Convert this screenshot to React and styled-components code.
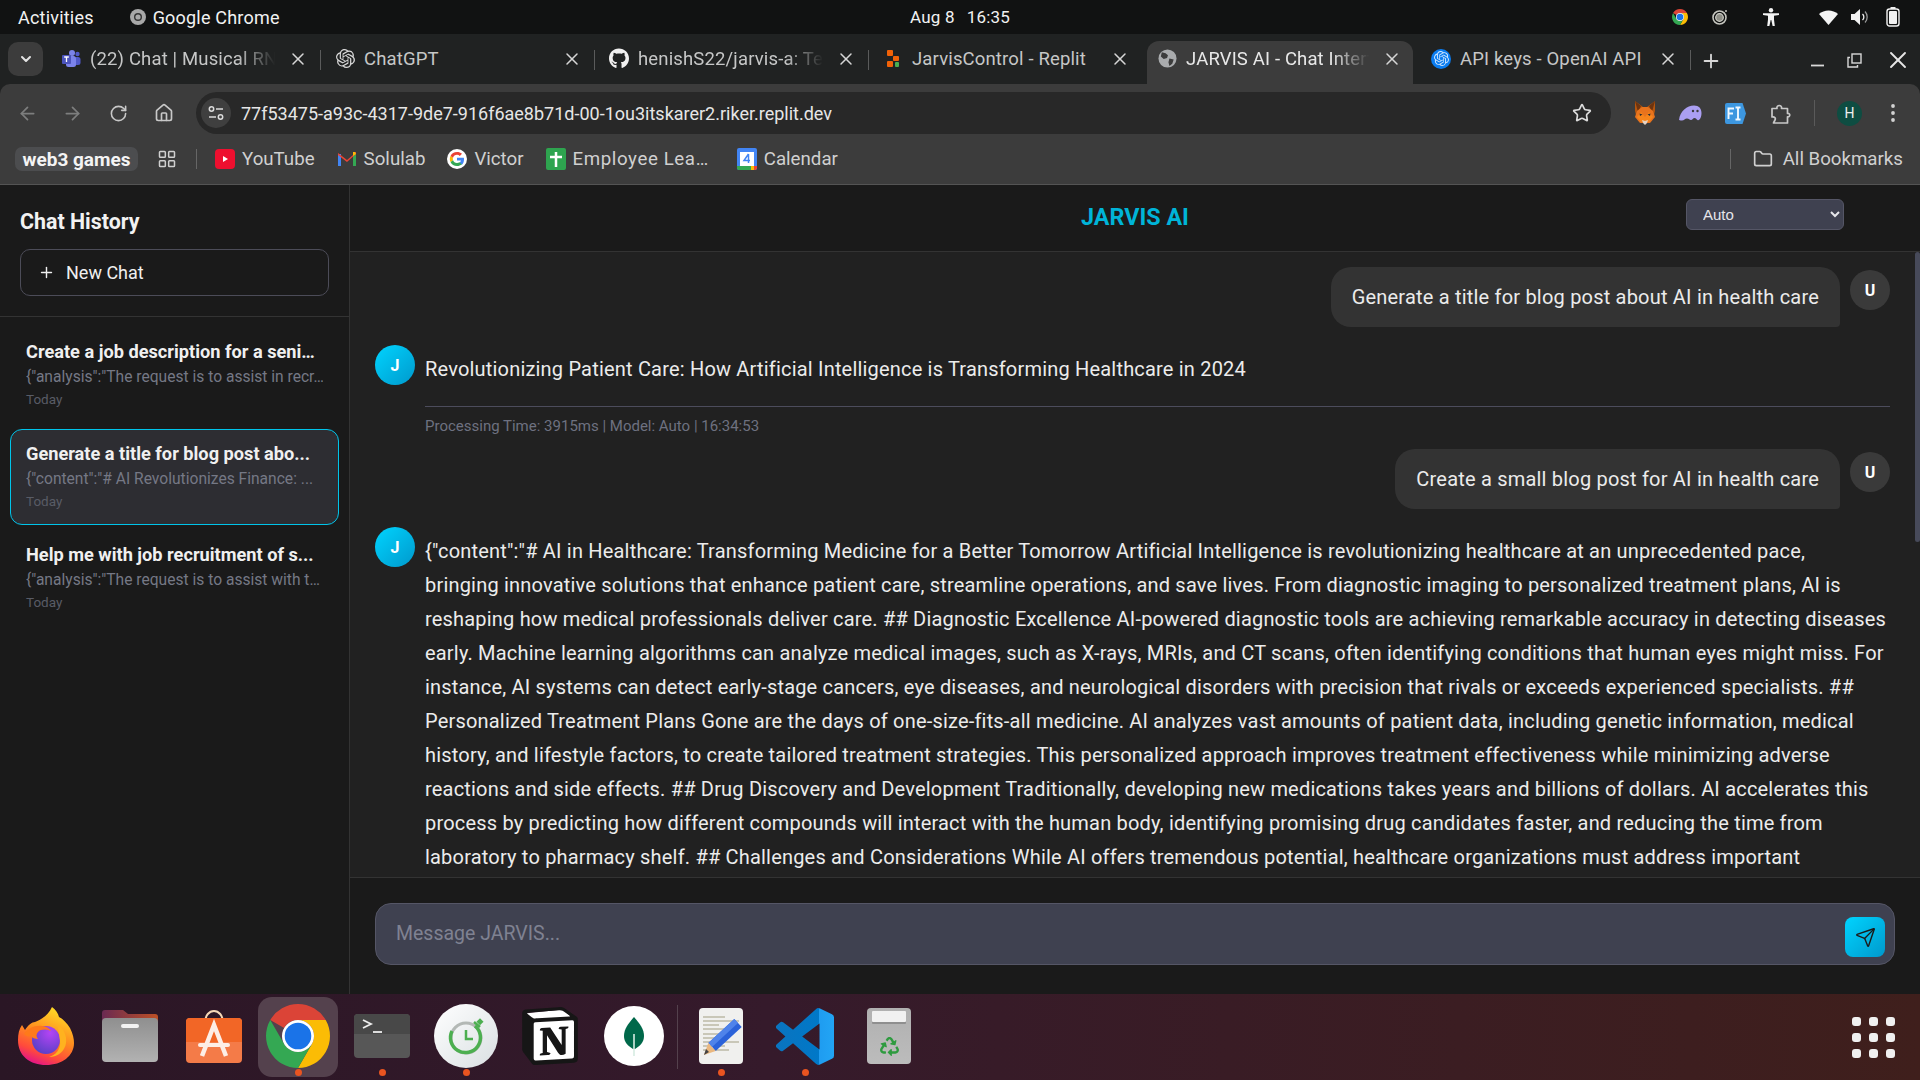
import React from "react";
import styled, { createGlobalStyle } from "styled-components";
import { ArrowLeft, ArrowRight, RotateCw, Home, Star, X, Plus, ChevronDown, Folder, LayoutGrid, Send } from "lucide-react";
import { FaGithub, FaRecycle } from "react-icons/fa";
import { SiOpenai, SiNotion } from "react-icons/si";

const UI = '"Roboto", "Noto Sans", sans-serif';

const Global = createGlobalStyle`
  html, body { margin: 0; padding: 0; background: #111; overflow: hidden; }
  * { box-sizing: border-box; }
  body { font-family: ${UI}; }
`;

const Screen = styled.div`
  width: 1920px; height: 1080px; display: flex; flex-direction: column; overflow: hidden;
`;

/* ---------- GNOME top bar ---------- */
const TopBar = styled.div`
  height: 34px; flex: none; background: #111212; color: #f2f2f2; display: grid;
  grid-template-columns: 1fr auto 1fr; align-items: center; padding: 0 18px; font-size: 18px; letter-spacing: .2px;
`;
const TopLeft = styled.div`display: flex; align-items: center; gap: 36px;`;
const AppName = styled.div`display: flex; align-items: center; gap: 7px;`;
const Clock = styled.div`display: flex; gap: 12px; font-size: 17px;`;
const Tray = styled.div`
  display: flex; align-items: center; justify-content: flex-end; color: #f2f2f2; margin-right: -6px;
`;
const TraySlot = styled.span`
  width: 30px; margin-left: ${p => p.$ml}px; display: flex; justify-content: center; align-items: center;
`;

/* ---------- tabs ---------- */
const TabStrip = styled.div`
  height: 50px; flex: none; background: #202222; display: flex; align-items: flex-end; padding-left: 8px; color: #c6c7c7;
`;
const TabMenu = styled.div`
  width: 35px; height: 34px; border-radius: 10px; background: #3c3c3c; margin: 0 4px 8px 0;
  display: flex; align-items: center; justify-content: center; color: #e4e4e4;
`;
const Tab = styled.div`
  width: ${p => (p.$active ? 266 : 274)}px; height: 43px; display: flex; align-items: center; gap: 9px; position: relative;
  padding: 0 ${p => (p.$active ? 11 : 13)}px 8px ${p => (p.$active ? 10 : 14)}px;
  margin: 0 ${p => (p.$active ? 4 : 0)}px;
  font-size: 18.5px; letter-spacing: .15px;
  color: ${p => (p.$active ? "#e8e8e8" : "#c6c7c7")};
  background: ${p => (p.$active ? "#3c3c3c" : "transparent")};
  border-radius: ${p => (p.$active ? "12px 12px 0 0" : "0")};
  &::after {
    content: ""; position: absolute; right: 0; top: 9px; height: 20px; width: 1px;
    background: ${p => (p.$sep ? "#5a5b5b" : "transparent")};
  }
`;
const TabIcon = styled.span`
  width: 20px; height: 20px; flex: none; display: flex; align-items: center; justify-content: center;
`;
const TabTitle = styled.span`
  flex: 1; min-width: 0; white-space: nowrap; overflow: hidden;
  -webkit-mask-image: ${p => (p.$fade ? "linear-gradient(90deg, #000 78%, transparent 98%)" : "none")};
`;
const TabClose = styled.span`
  width: 20px; flex: none; display: flex; justify-content: center; color: #d6d6d6;
`;
const NewTab = styled.div`
  width: 40px; height: 40px; margin-bottom: 3px; display: flex; align-items: center; justify-content: center; color: #d8d8d8;
`;
const WindowControls = styled.div`
  margin-left: auto; display: flex; align-items: center; gap: 22px; padding-right: 8px; height: 40px; margin-bottom: 4px; color: #e6e6e6;
`;

/* ---------- toolbar ---------- */
const Toolbar = styled.div`
  height: 50px; flex: none; background: #3c3c3c; display: flex; align-items: center; padding: 8px 0 0 16px; border-radius: 10px 10px 0 0;
`;
const ToolbarShade = styled.div`background: #202222; flex: none;`;
const NavButton = styled.span`
  width: 22px; height: 22px; margin-right: 23.5px; flex: none; display: flex; align-items: center; justify-content: center;
  color: ${p => (p.$dim ? "#7d7e7e" : "#c8c8c8")};
`;
const UrlField = styled.div`
  width: 1415px; height: 42px; flex: none; border-radius: 21px; background: #282828; margin-left: -2px;
  display: flex; align-items: center; padding: 0 19px 0 5px; color: #e6e6e6; font-size: 18px;
`;
const SiteChip = styled.span`
  width: 30px; height: 30px; border-radius: 50%; background: #3f3f3f; display: flex; align-items: center; justify-content: center; margin-right: 10px; color: #dcdcdc;
`;
const UrlText = styled.span`flex: 1; white-space: nowrap;`;
const ExtensionRow = styled.div`
  display: flex; align-items: center; flex: 1; padding-left: 11px;
`;
const ExtSlot = styled.span`
  width: 45.5px; display: flex; justify-content: center; align-items: center; flex: none; color: #d2d2d2;
  margin-left: ${p => p.$ml ?? 0}px;
`;
const ToolDivider = styled.span`width: 1px; height: 26px; background: #5a5a5a; margin: 0 12px 0 10px; flex: none;`;
const Avatar = styled.span`
  width: 25px; height: 25px; border-radius: 50%; background: #0e4d42; color: #f0f0f0; font-size: 14px; display: flex; align-items: center; justify-content: center; flex: none; margin-left: 10px;
`;

/* ---------- bookmarks ---------- */
const Bookmarks = styled.div`
  height: 51px; flex: none; background: #3c3c3c; border-bottom: 1px solid #545454; display: flex; align-items: center; padding: 0 17px 0 15px; color: #d0d0d0; font-size: 18.7px;
`;
const BookmarkPill = styled.span`
  height: 24px; width: 123px; border-radius: 7px; background: #4c4d4f; color: #f4f4f4; font-weight: 700; display: flex; align-items: center; justify-content: center; font-size: 19px; margin-right: 19px; white-space: nowrap;
`;
const BarDivider = styled.span`width: 1px; height: 20px; background: #666; margin: 0 ${p => p.$r ?? 18}px 0 ${p => p.$l ?? 19}px; flex: none;`;
const Bookmark = styled.span`
  display: flex; align-items: center; gap: 7px; margin-right: ${p => p.$mr ?? 22}px; white-space: nowrap; letter-spacing: ${p => p.$ls ?? 0}px;
`;
const BookmarkRight = styled.div`margin-left: auto; display: flex; align-items: center; gap: 10px;`;

/* ---------- app ---------- */
const Shell = styled.div`flex: 1; min-height: 0; display: flex; background: #1a1a1a;`;
const Sidebar = styled.aside`
  width: 350px; flex: none; border-right: 1px solid #333; display: flex; flex-direction: column; background: #1a1a1a;
`;
const SideHead = styled.div`
  height: 132px; flex: none; border-bottom: 1px solid #333; padding: 24px 20px 0;
`;
const SideTitle = styled.h2`
  margin: 0 0 14px; font-size: 21.4px; line-height: 26px; font-weight: 700; color: #f2f2f2;
`;
const NewChat = styled.button`
  width: 309px; height: 47px; border: 1px solid #4c4c58; border-radius: 10px; background: transparent; color: #f0f0f0;
  display: flex; align-items: center; gap: 11px; padding: 0 0 0 17px; font: 400 18px ${UI};
`;
const ChatList = styled.div`
  padding: 10px; display: flex; flex-direction: column; gap: 5.5px;
`;
const ChatItem = styled.div`
  height: 96px; padding: 11px 15px 0; border-radius: 12px;
  border: 1px solid ${p => (p.$active ? "#00c4ea" : "transparent")};
  background: ${p => (p.$active ? "#2d2d32" : "transparent")};
`;
const ChatName = styled.div`
  font-size: 18.2px; font-weight: 700; color: #f0f0f0; line-height: 26px; white-space: nowrap; overflow: hidden;
`;
const ChatPreview = styled.div`
  font-size: 15.6px; color: #757885; line-height: 24px; white-space: nowrap; overflow: hidden;
`;
const ChatDate = styled.div`
  font-size: 13.5px; color: #595c66; line-height: 21px;
`;

const Main = styled.main`flex: 1; min-width: 0; display: flex; flex-direction: column;`;
const MainHead = styled.header`
  height: 67px; flex: none; border-bottom: 1px solid #333; display: grid; grid-template-columns: 1fr auto 1fr; align-items: center; background: #1a1a1a;
`;
const Brand = styled.h1`
  grid-column: 2; margin: -2px 0 0; font-size: 23.3px; font-weight: 700; color: #00b4d8;
`;
const ModelSelect = styled.select`
  grid-column: 3; justify-self: end; margin: -7px 76px 0 0; width: 158px; height: 31px; border: 1px solid #555666; border-radius: 6px;
  background: #3f4150; color: #e6e6ea; font: 15px "Liberation Sans", Arial, sans-serif; padding-left: 12px;
`;
const Feed = styled.div`
  flex: 1; min-height: 0; overflow: hidden; background: #212121; padding: 15px 30px 0 25px; position: relative;
`;
const ScrollThumb = styled.div`
  position: absolute; right: 0; top: 0; width: 5px; height: 290px; background: #474a5a; border-radius: 3px;
`;
const UserRow = styled.div`display: flex; justify-content: flex-end; gap: 10px; margin-bottom: ${p => p.$mb}px;`;
const Bubble = styled.div`
  background: #333; color: #ebebeb; border-radius: 20px 20px 4px 20px; padding: 13px 21px; font-size: 20px; letter-spacing: .2px; line-height: 34px; white-space: nowrap;
`;
const Circle = styled.div`
  width: 40px; height: 40px; flex: none; border-radius: 50%; display: flex; align-items: center; justify-content: center; font-weight: 700; font-size: 16px; color: #fff;
  background: ${p => (p.$bot ? "linear-gradient(135deg, #00d4ff, #0099cc)" : "#3a3a3a")};
  margin-top: ${p => (p.$bot ? 0 : 3)}px;
`;
const BotRow = styled.div`display: flex; gap: 10px; margin-bottom: 13px;`;
const BotBody = styled.div`flex: 1; min-width: 0; padding-top: 7px; color: #ececec; font-size: 20px; letter-spacing: .19px; line-height: 34px;`;
const Line = styled.span`display: block; white-space: nowrap;`;
const Meta = styled.div`
  margin-top: 20px; border-top: 1px solid #4c4c5c; padding-top: 9px; font-size: 15px; letter-spacing: 0; line-height: 20px; color: #6e7180;
`;
const Composer = styled.div`
  height: 117px; flex: none; border-top: 1px solid #333; padding: 25px 25px 0; background: #1a1a1a;
`;
const InputBox = styled.div`
  height: 62px; border: 1px solid #555666; border-radius: 16px; background: #3f4150; display: flex; align-items: center; padding: 6px 9px 0 18px;
`;
const MessageInput = styled.input`
  flex: 1; min-width: 0; height: 40px; margin-top: -7px; border: 0; outline: 0; background: transparent; color: #eee; font: 19.5px ${UI};
  &::placeholder { color: #7f8292; opacity: 1; }
`;
const SendButton = styled.button`
  width: 40px; height: 40px; border: 0; border-radius: 8px; padding: 0; background: linear-gradient(135deg, #00d4ff, #0099cc); color: #1a1a1a;
  display: flex; align-items: center; justify-content: center;
`;

/* ---------- dock ---------- */
const Dock = styled.footer`
  height: 86px; flex: none; background: linear-gradient(90deg, #2a1625 0%, #351a2b 40%, #3f1f1c 100%); display: flex; align-items: center; padding: 0 25px 0 4px;
`;
const DockSlot = styled.div`
  width: ${p => (p.$active ? 80 : 84)}px; margin: 0 ${p => (p.$active ? 2 : 0)}px; height: 80px; flex: none; position: relative; display: flex; align-items: center; justify-content: center; border-radius: 14px; padding-bottom: 2px;
  background: ${p => (p.$active ? "#54414d" : "transparent")};
  ${p => p.$running ? `&::after { content: ""; position: absolute; bottom: 1px; left: calc(50% - 3.5px); width: 7px; height: 7px; border-radius: 50%; background: #e95420; }` : ""}
`;
const DockRule = styled.span`width: 1px; height: 64px; background: #54414d; flex: none; margin: 0 1px;`;
const AppGrid = styled.div`
  margin-left: auto; display: grid; grid-template-columns: repeat(3, 9px); gap: 7px 8px;
`;
const AppDot = styled.span`width: 9px; height: 9px; border-radius: 3px; background: #f0f0f0;`;

const ChipBadge = styled.span`
  width: 20px; height: 20px; border-radius: 50%; background: #0a7cf0; display: flex; align-items: center; justify-content: center;
`;
const NotionCube = styled.span`
  width: 58px; height: 60px; position: relative; display: flex; align-items: center; justify-content: center;
  &::before {
    content: ""; position: absolute; inset: 0; background: #fff;
    clip-path: polygon(10% 12%, 72% 6%, 94% 24%, 94% 90%, 26% 96%, 8% 76%);
  }
  svg { position: relative; }
`;
const TrashBin = styled.span`
  width: 44px; height: 56px; border-radius: 4px; background: linear-gradient(#b0b0b0, #bcbcbc); display: flex; align-items: flex-end; justify-content: center; padding-bottom: 8px; position: relative;
  &::before {
    content: ""; position: absolute; left: 5px; right: 5px; top: 3px; height: 11px; background: #f1f1f1; border-radius: 1px; box-shadow: 0 2px 0 #8f8f8f;
  }
`;

/* ---------- drawings ---------- */
const ChromeLogo = ({ size = 20 }) => (
  <svg width={size} height={size} viewBox="4 4 40 40">
    <path fill="#db4437" d="M24 4a20 20 0 0 1 17.32 10H24a10 10 0 0 0-8.66 5L6.68 14A20 20 0 0 1 24 4z" />
    <path fill="#fbbc05" d="M41.32 14A20 20 0 0 1 24 44l8.66-15A10 10 0 0 0 24 14z" />
    <path fill="#34a853" d="M6.68 14l8.66 15A10 10 0 0 0 32.66 29L24 44A20 20 0 0 1 6.68 14z" />
    <circle cx="24" cy="24" r="10" fill="#fff" />
    <circle cx="24" cy="24" r="8.300" fill="#1a73e8" />
  </svg>
);
const GreyChrome = () => (
  <svg width="16" height="16" viewBox="0 0 16 16">
    <circle cx="8" cy="8" r="8" fill="#a8a8a8" /><circle cx="8" cy="8" r="4" fill="#333" /><circle cx="8" cy="8" r="2.6" fill="#a8a8a8" />
  </svg>
);
const TeamsLogo = () => (
  <svg width="20" height="20" viewBox="0 0 20 20">
    <circle cx="11" cy="4" r="3" fill="#7b83eb" /><circle cx="16.5" cy="5" r="2.2" fill="#5059c9" />
    <rect x="13" y="8" width="6.5" height="8" rx="2.5" fill="#5059c9" /><rect x="5" y="7" width="10" height="11" rx="2.5" fill="#7b83eb" />
    <rect x="1" y="6" width="9" height="9" rx="1" fill="#4b53bc" /><path d="M3.2 8h4.6M5.5 8v5" stroke="#fff" strokeWidth="1.3" />
  </svg>
);
const ReplitLogo = () => (
  <svg width="14" height="20" viewBox="0 0 14 20">
    <rect x="1" y="1" width="6" height="6" rx="1" fill="#f26207" /><rect x="7" y="7" width="6" height="5" rx="1" fill="#f26207" /><rect x="1" y="12" width="6" height="6" rx="1" fill="#f26207" />
    <rect x="9" y="13" width="4" height="5" rx="1" fill="#4caf50" />
  </svg>
);
const GlobeLogo = () => (
  <svg width="19" height="19" viewBox="0 0 20 20">
    <circle cx="10" cy="10" r="9.5" fill="#a9abad" />
    <path fill="#3c3c3c" d="M4 3.5l4 1 2.5 2-1 3-3.5 1-3-2.500zM12 10l4.500 1-1.500 4.500-3 2.500-1-4z" />
  </svg>
);
const OpenAiChip = () => <ChipBadge><SiOpenai size={15} color="#cfe6ff" /></ChipBadge>;
const Wifi = () => (
  <svg width="19" height="15" viewBox="0 0 19 15"><path fill="#f4f4f4" d="M0 4C5-.8 14-.8 19 4L9.500 15z" /></svg>
);
const Speaker = () => (
  <svg width="19" height="16" viewBox="0 0 19 16">
    <path fill="#f2f2f2" d="M0 5h3.500L9 0v16l-5.500-5H0z" />
    <path d="M11.500 5a4 4 0 0 1 0 6" fill="none" stroke="#f2f2f2" strokeWidth="1.300" />
    <path d="M14 2.500a8 8 0 0 1 0 11" fill="none" stroke="#999" strokeWidth="1.300" />
  </svg>
);
const Battery = () => (
  <svg width="14" height="20" viewBox="0 0 14 20">
    <rect x="4.500" y="0" width="5" height="2" fill="#eee" /><rect x="1" y="2" width="12" height="17" rx="2.500" fill="none" stroke="#f2f2f2" strokeWidth="1.400" /><rect x="3" y="4" width="8" height="13" rx="1" fill="#f2f2f2" />
  </svg>
);
const TrayRing = () => (
  <svg width="16" height="16" viewBox="0 0 16 16">
    <circle cx="7.500" cy="8.500" r="6.500" fill="none" stroke="#c6c6bf" strokeWidth="1.600" /><circle cx="7.500" cy="8.500" r="3.800" fill="#8e8e86" stroke="#d0d0c8" strokeWidth="1.200" /><circle cx="14" cy="2" r="1" fill="#c6c6bf" />
  </svg>
);
const Person = () => (
  <svg width="16" height="18" viewBox="0 0 16 18" fill="#f4f4f4">
    <circle cx="8" cy="2.200" r="2.200" />
    <path d="M0 5.200h16v1.800l-5 .800v3.700l.8 6.500H9.600L8.300 12H7.700L6.400 18H4.200L5 11.500V7.800L0 7z" />
  </svg>
);
const Minimize = () => <svg width="15" height="14" viewBox="0 0 15 14"><path d="M1 12.500h13" stroke="#d8d8d8" strokeWidth="1.800" /></svg>;
const Restore = () => (
  <svg width="15" height="15" viewBox="0 0 15 15" fill="none" stroke="#d8d8d8" strokeWidth="1.400"><rect x="5" y="1" width="9" height="9" /><path d="M3 4.500H1V14h9.500v-2" /></svg>
);
const Tune = () => (
  <svg width="18" height="18" viewBox="0 0 18 18" fill="none" stroke="#dcdcdc" strokeWidth="1.500">
    <circle cx="4.500" cy="5" r="2.200" /><path d="M9 5h7M2 13h7" /><circle cx="13.500" cy="13" r="2.200" />
  </svg>
);
const Fox = () => (
  <svg width="22" height="24" viewBox="0 0 22 24">
    <path fill="#b5560f" d="M1 0l8 6h4l8-6 0 10-1 4H2L1 10z" />
    <path fill="#6d3410" d="M1 0l6 5-3 6zM21 0l-6 5 3 6z" />
    <path fill="#e8731d" d="M3 10l5-4h6l5 4 2 6-5 6H6l-5-6z" />
    <path fill="#f6851b" d="M7 11l4 5 4-5 4 5-4 5H7l-4-5z" />
    <path fill="#2a2a30" d="M5.500 12.500l3 1-2.500 1.500zM16.500 12.500l-3 1 2.500 1.500z" />
    <path fill="#e6d3c4" d="M8 19l3 1 3-1-1 3 -2 2-2-2z" />
  </svg>
);
const Ghost = () => (
  <svg width="24" height="16" viewBox="0 0 24 16">
    <path fill="#ab9ff2" d="M1 15C2 6 9 .5 16 .5c5 0 7.500 3 7.500 7.500 0 4.500-2 8-4 7-1-.5-1.500-2-3-2s-2 2-3.500 2S11 13.500 9 13.500 6 15.500 4 15.500s-3-.5-3-.5z" />
    <circle cx="15" cy="6" r="1.200" fill="#3c3c3c" /><circle cx="19.500" cy="6" r="1.200" fill="#3c3c3c" />
  </svg>
);
const FiBadge = () => (
  <svg width="21" height="21" viewBox="0 0 21 21">
    <path fill="#3d97e0" d="M2 0H17.500L21 10.500 17.500 21H2a2 2 0 0 1-2-2V2a2 2 0 0 1 2-2z" />
    <path fill="none" stroke="#f0f8ff" strokeWidth="1.900" d="M3.500 16V5.500h5.500M3.500 10.500h4.500M10.500 4.500h5M13 4.500v12M10.500 16.500h5" />
  </svg>
);
const PuzzlePiece = () => (
  <svg width="21" height="21" viewBox="0 0 21 21" fill="none" stroke="#c8c8c8" strokeWidth="1.700" strokeLinejoin="round">
    <path d="M1 5.500h5c-1-4 5.500-4 4.500 0h6v5c3-.8 3 4 0 3.300V20H2.500l1.500-3c1-2-.5-3.500-3-3z" />
  </svg>
);
const YouTube = () => <svg width="20" height="20" viewBox="0 0 20 20"><rect width="20" height="20" rx="4" fill="#ee0f2f" /><path d="M8 7l5 3-5 3z" fill="#fff" /></svg>;
const Gmail = () => (
  <svg width="20" height="20" viewBox="0 0 20 20">
    <path fill="#4285f4" d="M1 5h3v12H1z" /><path fill="#34a853" d="M16 5h3v12h-3z" />
    <path fill="#ea4335" d="M1 4l9 7 6-5V3l3 0 0 2-9 8-9-7z" /><path fill="#fbbc05" d="M16 3h2l1 2-3 2z" />
  </svg>
);
const GoogleG = () => (
  <svg width="20" height="20" viewBox="0 0 20 20">
    <circle cx="10" cy="10" r="10" fill="#fff" />
    <path fill="#4285f4" d="M17 10.200c0-.6 0-1-.2-1.500H10v2.900h4c-.2 1-.8 1.700-1.600 2.300l2.500 1.900c1.400-1.300 2.100-3.200 2.100-5.600z" />
    <path fill="#34a853" d="M10 17c2 0 3.600-.7 4.900-1.800L12.400 13.300c-.6.500-1.400.7-2.400.7-1.900 0-3.500-1.300-4-3l-2.500 2C4.600 15.400 7.100 17 10 17z" />
    <path fill="#fbbc05" d="M6 11c-.3-.8-.3-1.600 0-2.200L3.500 6.900c-.9 1.900-.9 4.100 0 6z" />
    <path fill="#ea4335" d="M10 5.800c1.100 0 2 .4 2.800 1.100L15 4.700C13.600 3.500 12 3 10 3 7.100 3 4.600 4.600 3.500 6.900L6 8.800c.5-1.700 2.100-3 4-3z" />
  </svg>
);
const SheetPlus = () => <svg width="20" height="22" viewBox="0 0 20 22"><rect width="20" height="22" rx="2" fill="#2ea44f" /><path d="M10 4v15M4 9h12" stroke="#fff" strokeWidth="2.500" /></svg>;
const CalendarIcon = () => (
  <svg width="20" height="22" viewBox="0 0 20 22">
    <rect width="20" height="22" rx="2" fill="#4285f4" /><rect x="3" y="4" width="14" height="14" fill="#fff" />
    <path d="M0 18h14v4H2a2 2 0 0 1-2-2z" fill="#34a853" /><path d="M14 18h3v4h-3z" fill="#fbbc05" /><path d="M17 18h3v2a2 2 0 0 1-2 2h-1z" fill="#ea4335" />
    <path d="M11.500 6L7 12.500h6M11.500 6v9" fill="none" stroke="#4285f4" strokeWidth="1.500" />
  </svg>
);

const FirefoxIcon = () => (
  <svg width="56" height="58" viewBox="0 0 56 58">
    <defs>
      <linearGradient id="ff" x1="0.75" y1="0" x2="0.35" y2="1"><stop offset="0" stopColor="#ffe226" /><stop offset="0.5" stopColor="#ff8a1f" /><stop offset="0.8" stopColor="#ff4a3c" /><stop offset="1" stopColor="#e31587" /></linearGradient>
      <radialGradient id="fp" cx="0.65" cy="0.25" r="0.9"><stop offset="0" stopColor="#b444f5" /><stop offset="1" stopColor="#4f3fc0" /></radialGradient>
    </defs>
    <path fill="url(#ff)" d="M34 0c4 3 6 6 7 10 4 2 8 6 11 11 3 6 4 11 4 15 0 13-12 22-28 22S0 49 0 33C0 27 1 22 4 18l3 5c3-5 7-8 10-8C22 13 30 9 34 0z" />
    <circle cx="28" cy="33" r="14" fill="url(#fp)" />
    <path fill="#ffb21f" d="M40 18c6 4 9 11 8 18-1 8-8 14-17 14 7-2 12-8 11-16-.5-6-2-11-2-16z" />
    <path fill="#ff7a1a" d="M6 27c4-6 11-9 18-8 4 .500 7 2 9 5-5-2-10-2-13 1-2 2-2 5 0 7-3 0-6-1-7-3-3 1-5 0-7-2z" />
  </svg>
);
const FolderIcon = () => (
  <svg width="56" height="52" viewBox="0 0 56 52">
    <defs>
      <linearGradient id="ftab" x1="0" x2="1" y1="0" y2="0"><stop offset="0" stopColor="#6a2a52" /><stop offset="1" stopColor="#bd5026" /></linearGradient>
      <linearGradient id="fbody" x1="0" x2="0" y1="0" y2="1"><stop offset="0" stopColor="#8f8f8f" /><stop offset="1" stopColor="#b2b2b2" /></linearGradient>
    </defs>
    <path fill="url(#ftab)" d="M0 3a3 3 0 0 1 3-3h18l5 4h27a3 3 0 0 1 3 3v12H0z" />
    <rect y="8" width="56" height="44" rx="4" fill="url(#fbody)" /><rect x="19" y="14" width="18" height="4" rx="2" fill="#f2f2f2" />
  </svg>
);
const StoreIcon = () => (
  <svg width="56" height="54" viewBox="0 0 56 54">
    <path d="M19 14C19 -2 37 -2 37 14" fill="none" stroke="#f6d9b8" strokeWidth="2" />
    <rect y="9" width="56" height="45" rx="4" fill="#f47b48" />
    <path d="M0 13a4 4 0 0 1 4-4h48a4 4 0 0 1 4 4v20H0z" fill="#f26626" />
    <path d="M16 47L28 16l12 31" fill="none" stroke="#fdeee6" strokeWidth="4.500" />
    <rect x="12" y="34" width="32" height="4" rx="2" fill="#fdeee6" />
  </svg>
);
const TerminalIcon = () => (
  <svg width="56" height="44" viewBox="0 0 56 44">
    <rect width="56" height="44" rx="4" fill="#575757" /><path d="M0 4a4 4 0 0 1 4-4h48a4 4 0 0 1 4 4v16H0z" fill="#484848" />
    <path d="M9 6l8 4-8 4" fill="none" stroke="#eee" strokeWidth="1.800" /><path d="M19 18h9" stroke="#eee" strokeWidth="1.800" />
  </svg>
);
const TimeIcon = () => (
  <svg width="64" height="64" viewBox="0 0 64 64">
    <defs><linearGradient id="tm" x1="0" x2="1" y1="0" y2="1"><stop offset="0" stopColor="#ffffff" /><stop offset="1" stopColor="#d9dfe2" /></linearGradient></defs>
    <circle cx="32" cy="32" r="32" fill="url(#tm)" />
    <circle cx="32" cy="34" r="15" fill="none" stroke="#b3b8b5" strokeWidth="3" />
    <path d="M41 22a15 15 0 1 1-23 5" fill="none" stroke="#4caf50" strokeWidth="3.500" />
    <path d="M32 26v9h7" fill="none" stroke="#4caf50" strokeWidth="2.500" /><path d="M40 18l6 5" stroke="#4caf50" strokeWidth="2.500" /><rect x="44" y="15" width="5" height="5" fill="#4caf50" transform="rotate(45 46 17)" />
  </svg>
);
const NotionIcon = () => <NotionCube><SiNotion size={60} color="#161616" /></NotionCube>;
const MongoIcon = () => (
  <svg width="60" height="60" viewBox="0 0 60 60">
    <circle cx="30" cy="30" r="30" fill="#fff" />
    <path fill="#00684a" d="M30 11c6 7 10 12 10 19 0 6-4 10-9 13h-2c-5-3-9-7-9-13 0-7 4-12 10-19z" />
    <path d="M30 28v22" stroke="#d6ece2" strokeWidth="1.600" />
  </svg>
);
const EditorIcon = () => (
  <svg width="44" height="56" viewBox="0 0 44 56">
    <rect width="44" height="56" rx="4" fill="#f0f0ee" />
    <path d="M4 9h22M4 13h36M4 17h16M4 21h28M4 26h22M4 30h22M4 34h36M4 38h22M4 42h26" stroke="#c9c7b8" strokeWidth="2" />
    <path d="M35.300 11l7.400 8-26 24-7.400-8z" fill="#2b62d9" /><path d="M35.300 11l3.700 4-26 24-3.700-4z" fill="#4f83ea" />
    <path d="M9.300 35l7.400 8L5 47z" fill="#eab880" /><path d="M7 41l3 3-5 3z" fill="#444" />
  </svg>
);
const CodeIcon = () => (
  <svg width="58" height="57" viewBox="0 0 24 24" preserveAspectRatio="none">
    <defs><linearGradient id="vs" x1="0" y1="0" x2="1" y2="0"><stop offset="0" stopColor="#0a74bf" /><stop offset="0.74" stopColor="#0078c8" /><stop offset="0.74" stopColor="#1f9cf0" /><stop offset="1" stopColor="#22a5f5" /></linearGradient></defs>
    <path fill="url(#vs)" d="M23.150 2.587L18.210.21a1.494 1.494 0 0 0-1.705.29l-9.460 8.630-4.120-3.128a.999.999 0 0 0-1.276.057L.327 7.261A1 1 0 0 0 .326 8.740L3.899 12 .326 15.260a1 1 0 0 0 .001 1.479L1.650 17.940a.999.999 0 0 0 1.276.057l4.120-3.128 9.460 8.630a1.492 1.492 0 0 0 1.704.29l4.942-2.377A1.500 1.500 0 0 0 24 20.060V3.939a1.500 1.500 0 0 0-.850-1.352zm-5.146 14.861L10.826 12l7.178-5.448v10.896z" />
  </svg>
);
const TrashIcon = () => <TrashBin><FaRecycle size={19} color="#2e9b3f" /></TrashBin>;

/* ---------- data ---------- */
const tabs = [
  { icon: <TeamsLogo />, title: "(22) Chat | Musical RN", fade: true, sep: true },
  { icon: <SiOpenai size={19} color="#d8d8d8" />, title: "ChatGPT", sep: true },
  { icon: <FaGithub size={21} color="#f0f0f0" />, title: "henishS22/jarvis-a: Te", fade: true, sep: true },
  { icon: <ReplitLogo />, title: "JarvisControl - Replit", sep: false },
  { icon: <GlobeLogo />, title: "JARVIS AI - Chat Interf", fade: true, active: true },
  { icon: <OpenAiChip />, title: "API keys - OpenAI API", sep: true },
];
const chats = [
  { name: "Create a job description for a seni…", preview: "{\"analysis\":\"The request is to assist in recr…" },
  { name: "Generate a title for blog post abo...", preview: "{\"content\":\"# AI Revolutionizes Finance: ...", active: true },
  { name: "Help me with job recruitment of s...", preview: "{\"analysis\":\"The request is to assist with t…" },
];
const longLines = [
  "{\"content\":\"# AI in Healthcare: Transforming Medicine for a Better Tomorrow Artificial Intelligence is revolutionizing healthcare at an unprecedented pace,",
  "bringing innovative solutions that enhance patient care, streamline operations, and save lives. From diagnostic imaging to personalized treatment plans, AI is",
  "reshaping how medical professionals deliver care. ## Diagnostic Excellence AI-powered diagnostic tools are achieving remarkable accuracy in detecting diseases",
  "early. Machine learning algorithms can analyze medical images, such as X-rays, MRIs, and CT scans, often identifying conditions that human eyes might miss. For",
  "instance, AI systems can detect early-stage cancers, eye diseases, and neurological disorders with precision that rivals or exceeds experienced specialists. ##",
  "Personalized Treatment Plans Gone are the days of one-size-fits-all medicine. AI analyzes vast amounts of patient data, including genetic information, medical",
  "history, and lifestyle factors, to create tailored treatment strategies. This personalized approach improves treatment effectiveness while minimizing adverse",
  "reactions and side effects. ## Drug Discovery and Development Traditionally, developing new medications takes years and billions of dollars. AI accelerates this",
  "process by predicting how different compounds will interact with the human body, identifying promising drug candidates faster, and reducing the time from",
  "laboratory to pharmacy shelf. ## Challenges and Considerations While AI offers tremendous potential, healthcare organizations must address important",
];
const dockApps = [
  { icon: <FirefoxIcon /> },
  { icon: <FolderIcon /> },
  { icon: <StoreIcon /> },
  { icon: <ChromeLogo size={64} />, active: true, running: true },
  { icon: <TerminalIcon />, running: true },
  { icon: <TimeIcon />, running: true },
  { icon: <NotionIcon /> },
  { icon: <MongoIcon /> },
];

export default function App() {
  return (
    <Screen>
      <Global />
      <TopBar>
        <TopLeft>
          <span>Activities</span>
          <AppName><GreyChrome />Google Chrome</AppName>
        </TopLeft>
        <Clock><span>Aug 8</span><span>16:35</span></Clock>
        <Tray>
          <TraySlot $ml={0}><ChromeLogo size={16} /></TraySlot>
          <TraySlot $ml={10}><TrayRing /></TraySlot>
          <TraySlot $ml={21}><Person /></TraySlot>
          <TraySlot $ml={27}><Wifi /></TraySlot>
          <TraySlot $ml={2}><Speaker /></TraySlot>
          <TraySlot $ml={3}><Battery /></TraySlot>
        </Tray>
      </TopBar>

      <TabStrip>
        <TabMenu><ChevronDown size={16} strokeWidth={3} /></TabMenu>
        {tabs.map(t => (
          <Tab key={t.title} $active={t.active} $sep={t.sep}>
            <TabIcon>{t.icon}</TabIcon>
            <TabTitle $fade={t.fade}>{t.title}</TabTitle>
            <TabClose><X size={20} strokeWidth={1.8} /></TabClose>
          </Tab>
        ))}
        <NewTab><Plus size={22} /></NewTab>
        <WindowControls>
          <Minimize /><Restore /><X size={28} strokeWidth={1.6} />
        </WindowControls>
      </TabStrip>

      <ToolbarShade>
        <Toolbar>
          <NavButton $dim><ArrowLeft size={21} /></NavButton>
          <NavButton $dim><ArrowRight size={21} /></NavButton>
          <NavButton><RotateCw size={19} /></NavButton>
          <NavButton><Home size={20} /></NavButton>
          <UrlField>
            <SiteChip><Tune /></SiteChip>
            <UrlText>77f53475-a93c-4317-9de7-916f6ae8b71d-00-1ou3itskarer2.riker.replit.dev</UrlText>
            <Star size={20} color="#dcdcdc" />
          </UrlField>
          <ExtensionRow>
            <ExtSlot><Fox /></ExtSlot>
            <ExtSlot><Ghost /></ExtSlot>
            <ExtSlot><FiBadge /></ExtSlot>
            <ExtSlot><PuzzlePiece /></ExtSlot>
            <ToolDivider />
            <Avatar>H</Avatar>
            <ExtSlot $ml={8}>
              <svg width="4" height="20" viewBox="0 0 4 20" fill="#d2d2d2"><circle cx="2" cy="3" r="1.900" /><circle cx="2" cy="10" r="1.900" /><circle cx="2" cy="17" r="1.900" /></svg>
            </ExtSlot>
          </ExtensionRow>
        </Toolbar>
      </ToolbarShade>

      <Bookmarks>
        <BookmarkPill>web3 games</BookmarkPill>
        <LayoutGrid size={20} strokeWidth={1.8} />
        <BarDivider />
        <Bookmark><YouTube />YouTube</Bookmark>
        <Bookmark><Gmail />Solulab</Bookmark>
        <Bookmark><GoogleG />Victor</Bookmark>
        <Bookmark $mr={28} $ls={.6}><SheetPlus />Employee Lea…</Bookmark>
        <Bookmark><CalendarIcon />Calendar</Bookmark>
        <BookmarkRight>
          <BarDivider $l={0} $r={12} />
          <Folder size={20} />
          <span>All Bookmarks</span>
        </BookmarkRight>
      </Bookmarks>

      <Shell>
        <Sidebar>
          <SideHead>
            <SideTitle>Chat History</SideTitle>
            <NewChat><Plus size={17} />New Chat</NewChat>
          </SideHead>
          <ChatList>
            {chats.map(c => (
              <ChatItem key={c.name} $active={c.active}>
                <ChatName>{c.name}</ChatName>
                <ChatPreview>{c.preview}</ChatPreview>
                <ChatDate>Today</ChatDate>
              </ChatItem>
            ))}
          </ChatList>
        </Sidebar>
        <Main>
          <MainHead>
            <Brand>JARVIS AI</Brand>
            <ModelSelect defaultValue="Auto"><option>Auto</option></ModelSelect>
          </MainHead>
          <Feed>
            <ScrollThumb />
            <UserRow $mb={18}>
              <Bubble>Generate a title for blog post about AI in health care</Bubble>
              <Circle>U</Circle>
            </UserRow>
            <BotRow>
              <Circle $bot>J</Circle>
              <BotBody>
                Revolutionizing Patient Care: How Artificial Intelligence is Transforming Healthcare in 2024
                <Meta>Processing Time: 3915ms | Model: Auto | 16:34:53</Meta>
              </BotBody>
            </BotRow>
            <UserRow $mb={18}>
              <Bubble>Create a small blog post for AI in health care</Bubble>
              <Circle>U</Circle>
            </UserRow>
            <BotRow>
              <Circle $bot>J</Circle>
              <BotBody>
                {longLines.map(l => <Line key={l}>{l}</Line>)}
              </BotBody>
            </BotRow>
          </Feed>
          <Composer>
            <InputBox>
              <MessageInput placeholder="Message JARVIS..." />
              <SendButton aria-label="Send"><Send size={21} strokeWidth={1.6} /></SendButton>
            </InputBox>
          </Composer>
        </Main>
      </Shell>

      <Dock>
        {dockApps.map((a, i) => (
          <DockSlot key={i} $active={a.active} $running={a.running}>{a.icon}</DockSlot>
        ))}
        <DockRule />
        <DockSlot $running><EditorIcon /></DockSlot>
        <DockSlot $running><CodeIcon /></DockSlot>
        <DockSlot><TrashIcon /></DockSlot>
        <AppGrid>{Array.from({ length: 9 }, (_, i) => <AppDot key={i} />)}</AppGrid>
      </Dock>
    </Screen>
  );
}
